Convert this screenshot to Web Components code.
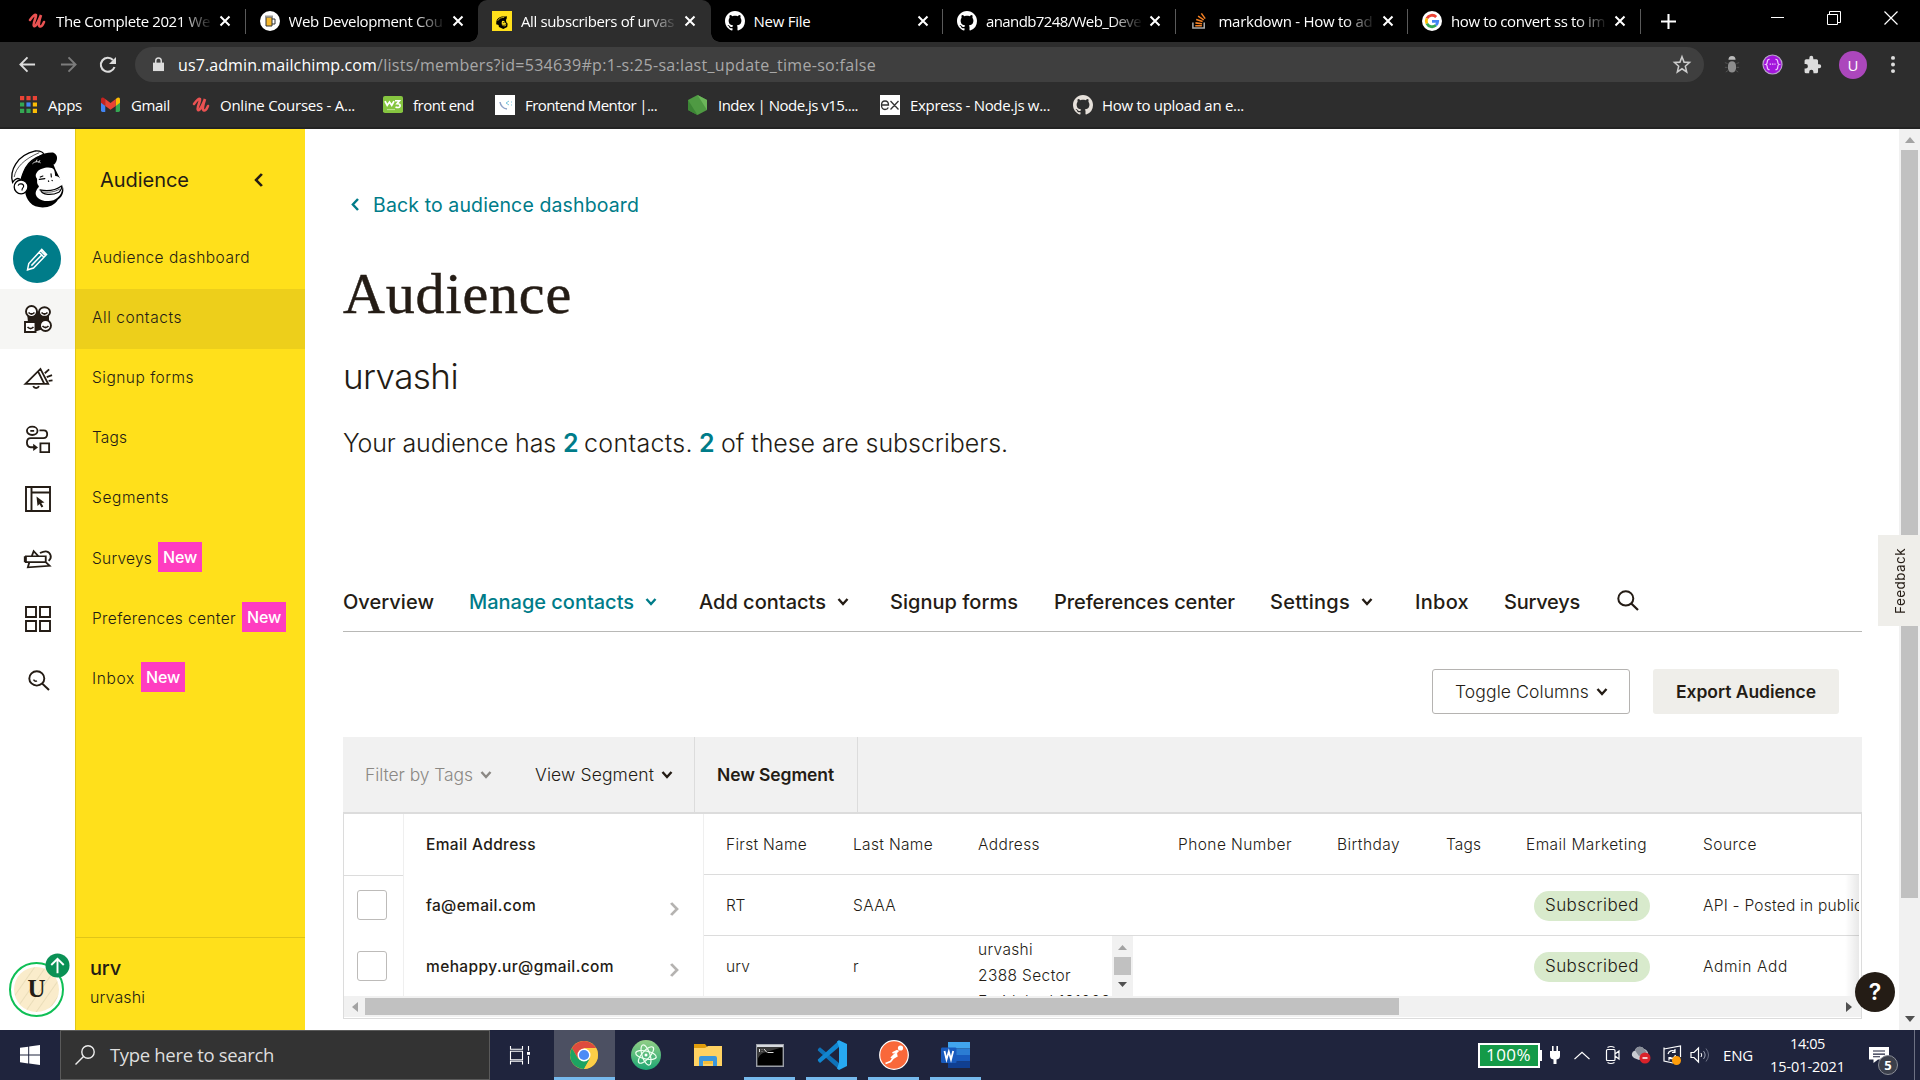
<!DOCTYPE html>
<html lang="en">
<head>
<meta charset="utf-8">
<title>All subscribers of urvashi</title>
<style>
html,body{margin:0;height:100%;overflow:hidden;background:#fff}
body{font-family:Inter,"Liberation Sans",sans-serif;color:#241c15}
</style>
</head>
<body>
<desktop-screen></desktop-screen>
<script>
const define = (name, css, html, setup) => {
  const t = document.createElement('template');
  customElements.define(name, class extends HTMLElement {
    connectedCallback() {
      if (this.shadowRoot) return;
      const root = this.attachShadow({mode: 'open'});
      t.innerHTML = '<style>*{box-sizing:border-box}' + css + '</style>' + (typeof html === 'function' ? html(this) : html);
      root.appendChild(t.content.cloneNode(true));
      if (setup) setup(this, root);
    }
  });
};

/* Text run tracked to an exact advance width */
define('fit-text', ':host{display:block;flex:none;white-space:pre}span{display:inline-block}', '<span><slot></slot></span>', (el, root) => {
  const w = +el.getAttribute('w');
  if (!w) return;
  el.style.width = w + 'px';
  const s = root.querySelector('span');
  s.style.letterSpacing = '0px';
  const nat = s.getBoundingClientRect().width;
  s.style.letterSpacing = ((w - nat) / el.textContent.length) + 'px';
});

const GH = '<path fill="currentColor" d="M8 0C3.58 0 0 3.58 0 8c0 3.54 2.29 6.53 5.47 7.59.4.07.55-.17.55-.38 0-.19-.01-.82-.01-1.49-2.01.37-2.53-.49-2.69-.94-.09-.23-.48-.94-.82-1.13-.28-.15-.68-.52-.01-.53.63-.01 1.08.58 1.23.82.72 1.21 1.87.87 2.33.66.07-.52.28-.87.51-1.07-1.78-.2-3.64-.89-3.64-3.95 0-.87.31-1.59.82-2.15-.08-.2-.36-1.02.08-2.12 0 0 .67-.21 2.2.82.64-.18 1.32-.27 2-.27s1.36.09 2 .27c1.53-1.04 2.2-.82 2.2-.82.44 1.1.16 1.92.08 2.12.51.56.82 1.27.82 2.15 0 3.07-1.87 3.75-3.65 3.95.29.25.54.73.54 1.48 0 1.07-.01 1.93-.01 2.2 0 .21.15.46.55.38A8.01 8.01 0 0 0 16 8c0-4.42-3.58-8-8-8z"/>';
const CHIMP = '<path d="M66 118C56 140 62 152 76 164C70 190 80 216 106 229C134 238 164 229 175 209C192 200 196 178 188 163C184 146 176 134 168 118L160 98L120 84L80 92Z"/><path d="M36 156C26 122 48 74 106 61C122 60 134 66 130 73C108 80 86 94 76 112C68 128 64 138 62 149C52 140 42 146 36 156Z" fill="#fff" stroke="#000" stroke-width="4"/><path d="M41 140C46 112 70 86 118 66" fill="none" stroke="#000" stroke-width="2"/><path d="M92 104C96 84 128 64 162 66C176 72 176 90 163 103C146 94 124 98 108 116Z"/><path d="M97 100C104 92 116 92 122 97M108 95l3-8M116 96l4-7" fill="none" stroke="#fff" stroke-width="2.5"/><circle cx="62" cy="170" r="21" fill="#fff" stroke="#000" stroke-width="4"/><path d="M53 166C56 158 70 160 70 168C69 174 64 172 65 181" fill="none" stroke="#000" stroke-width="3.500"/><path d="M112 124C122 110 158 106 163 118C166 124 166 132 167 137C182 138 192 154 189 172C187 200 166 214 144 213C118 213 102 197 108 183C112 174 116 172 117 168C106 156 116 150 108 141C106 134 107 130 112 124Z" fill="#fff"/><g fill="none" stroke="#000" stroke-width="3.6" stroke-linecap="round"><path d="M120 179C146 184 168 180 186 167M122 180C126 196 158 196 178 186C185 181 188 172 186 168"/><path d="M126 185C146 188 164 186 180 177" stroke-width="2"/><path d="M118 147l17-2M121 140l8-3M154 130l1 10M146 152l1 1M157 150l1 1"/></g>';
const STK = 'fill="none" stroke="currentColor"';
const ICONS = {
  udemy: ['0 0 18 18', '<path d="M2 8C5 4 7 2 8 3S4 13 6 14S11 8 13 3C11 9 10 14 12 14.500S15 12 16 10" fill="none" stroke="#ea5252" stroke-width="2.600" stroke-linecap="round"/>'],
  beer: ['0 0 20 20', '<circle cx="10" cy="10" r="10" fill="#fff"/><path d="M6 6h6v9H6z" fill="#f5b82e" stroke="#333"/><path d="M12 8h3v5h-3" fill="none" stroke="#333"/><path d="M5 5.500h8" stroke="#999" stroke-width="2"/>'],
  chimpfav: ['0 0 230 250', '<path fill="#ffe01b" d="M0 0h230v250H0z"/>' + '<path d="M50 130C60 80 110 60 150 70L172 66L168 100L160 110L165 140L180 160L175 200L130 225L80 200L75 175L48 165Z"/><path d="M66 122C80 90 110 80 140 80" fill="none" stroke="#ffe01b" stroke-width="9"/><path d="M115 125q30-10 35 20q25 20 10 38q-25 15-45-4q-10-20 0-54Z" fill="#ffe01b"/><path d="M115 175q20 12 50-5M125 145h20" stroke="#000" stroke-width="8" fill="none"/>'],
  github: ['0 0 16 16', GH],
  so: ['0 0 18 20', '<path d="M2 12v6h12v-6" fill="none" stroke="#aaa" stroke-width="1.600"/><path d="M4.500 15.500h7M4.700 12.500l7 .8M5.500 9l6.800 2M7.500 5.500l6 3.800M11 2.500l4 5.500" stroke="#f48024" stroke-width="1.600"/>'],
  google: ['0 0 20 20', '<circle cx="10" cy="10" r="10" fill="#fff"/><g fill="none" stroke-width="2.800"><path d="M14.200 6A5.800 5.800 0 0 0 4.900 7.400" stroke="#ea4335"/><path d="M4.900 7.400A5.800 5.800 0 0 0 4.900 12.600" stroke="#fbbc05"/><path d="M4.900 12.600A5.800 5.800 0 0 0 13.900 14.300" stroke="#34a853"/><path d="M13.900 14.300A5.600 5.600 0 0 0 15.700 10.300H10" stroke="#4285f4"/></g>'],
  x: ['0 0 12 12', '<path d="M1.500 1.500l9 9M10.500 1.500l-9 9" stroke="currentColor" stroke-width="2"/>'],
  plus: ['0 0 16 16', '<path d="M8 0v16M0 8h16" stroke="#fff" stroke-width="2.200"/>'],
  min: ['0 0 14 14', '<path d="M0 6.500h13" stroke="#fff"/>'],
  restore: ['0 0 14 14', '<path d="M.5 3.500h10v10H.5zM2.500 3V.5h11v11H11" fill="none" stroke="#fff"/>'],
  close: ['0 0 14 14', '<path d="M.5.5l13 13M13.500.5l-13 13" stroke="#fff" stroke-width="1.200"/>'],
  back: ['0 0 18 18', `<path ${STK} stroke-width="2" d="M17 9H2M9 1.500L1.500 9L9 16.500"/>`],
  fwd: ['0 0 18 18', `<path ${STK} stroke-width="2" d="M1 9h15M9 1.500L16.500 9L9 16.500"/>`],
  reload: ['0 0 18 18', '<path d="M15.500 11A7 7 0 1 1 14 4" fill="none" stroke="currentColor" stroke-width="2.100"/><path d="M17 1v7h-7z" fill="currentColor"/>'],
  lock: ['0 0 12 16', '<path d="M0 6h12v9H0z" fill="currentColor"/><path d="M3 7V4a3 3 0 0 1 6 0v3" fill="none" stroke="currentColor" stroke-width="1.600"/>'],
  star: ['0 0 20 20', `<path ${STK} stroke-width="1.700" d="M10 1.800l2.300 5.700 6 .4-4.600 3.900 1.500 6-5.200-3.300-5.200 3.300 1.500-6L1.700 7.900l6-.4z"/>`],
  bug: ['0 0 18 20', '<path d="M5 5a4 4 0 0 1 8 0z" fill="#bbb"/><rect x="4.500" y="6.500" width="9" height="12" rx="4.500" fill="#8d8d8d"/><path d="M1 8l3 1M17 8l-3 1M1 13h3M17 13h-3M2 18l3-2M16 18l-3-2" stroke="#555"/>'],
  purple: ['0 0 22 22', '<circle cx="11" cy="11" r="10" fill="#a316dc" stroke="#b9a0cc" stroke-width="1.200"/><path d="M8 5.500q-2.500 0-2.500 3q0 2-1.500 2.500q1.500.5 1.500 2.500q0 3 2.500 3M14 5.500q2.500 0 2.500 3q0 2 1.500 2.500q-1.500.5-1.500 2.500q0 3-2.500 3M8 10.500h1.500M10.500 10.500H12M13 10.500h1.200" fill="none" stroke="#f0c6ff" stroke-width="1.300"/>'],
  puzzle: ['0 0 24 24', '<path fill="#dcdcdc" d="M20.500 11H19V7a2 2 0 0 0-2-2h-4V3.500a2.500 2.500 0 0 0-5 0V5H4a2 2 0 0 0-2 2v3.800h1.500a2.700 2.700 0 0 1 0 5.400H2V20a2 2 0 0 0 2 2h3.800v-1.500a2.700 2.700 0 0 1 5.400 0V22H17a2 2 0 0 0 2-2v-4h1.500a2.500 2.500 0 0 0 0-5z"/>'],
  dots: ['0 0 4 18', '<g fill="#ddd"><circle cx="2" cy="2" r="2"/><circle cx="2" cy="9" r="2"/><circle cx="2" cy="16" r="2"/></g>'],
  apps: ['0 0 17 17', '<path fill="#ea4335" d="M0 0h4.200v4.200H0zM6.400 0h4.200v4.200H6.400zM12.800 0H17v4.200h-4.200z"/><path fill="#34a853" d="M0 6.400h4.200v4.200H0zM0 12.800h4.200V17H0zM6.400 12.800h4.200V17H6.400z"/><path fill="#4285f4" d="M6.400 6.400h4.200v4.200H6.400z"/><path fill="#fbbc05" d="M12.800 6.400H17v4.200h-4.200zM12.800 12.800H17V17h-4.200z"/>'],
  gmail: ['0 0 20 16', '<path fill="#4285f4" d="M0 3h4.500v13H1.500Q0 16 0 14.500z"/><path fill="#34a853" d="M15.500 3H20v11.500q0 1.500-1.500 1.500h-3z"/><path fill="#fbbc04" d="M15.500 2Q20-1.500 20 3v3l-4.500 3.500z"/><path fill="#c5221f" d="M4.500 2Q0-1.500 0 3v3l4.500 3.500z"/><path fill="#ea4335" d="M4.500 2L10 6.300 15.500 2v7.500L10 13.500 4.500 9.500z"/>'],
  w3: ['0 0 20 20', '<rect width="20" height="20" rx="2" fill="#86c540"/><path d="M2 6l2.200 5L6.500 7l2.200 4L11 6M12 5.500h4.500L14 9q3.500 0 3 3q-1 2.500-4.500 1" fill="none" stroke="#fff" stroke-width="1.800"/><path d="M4 16h8" stroke="#c8e8a0"/>'],
  fm: ['0 0 20 20', '<path fill="#fff" d="M0 0h20v20H0z"/><path d="M5 7q1 6 7 7" fill="none" stroke="#8fa3c8" stroke-width="1.500"/><path d="M14 6l-3 2 3 2M16 7h1M16 10h1" fill="none" stroke="#7cc5dd"/>'],
  node: ['0 0 18 20', '<path fill="#4f9a43" d="M9 0l9 5v10l-9 5-9-5V5z"/><path fill="#6cb65a" d="M9 0l9 5v10z"/><path fill="#3c8535" d="M0 5l9 15-9-5z"/>'],
  express: ['0 0 20 20', '<path fill="#fff" d="M0 0h20v20H0z"/><path d="M1.500 10h7q0-4-3.500-4T1.500 10q0 4.500 3.500 4.500q2.500 0 3.300-2M10.500 6l8 8.500M18.500 6l-8 8.500" fill="none" stroke="#333" stroke-width="1.300"/>'],
  pencil: ['0 0 30 30', '<path d="M4 26.500L5.500 19.500 20.500 3.800 26 9.500 11 24.500zM17.500 7l5.500 5.500M19.300 5.200l5.500 5.500M8.500 21.800L21 9.500" fill="none" stroke="#fff" stroke-width="1.700"/>'],
  people: ['0 0 28 28', '<path fill="#241c15" d="M3 8q11-3 22 0v12q-10 8-20 6z"/><g fill="#fff" stroke="#241c15" stroke-width="1.900"><circle cx="7.500" cy="6.500" r="5.500"/><ellipse cx="20.500" cy="7" rx="5.500" ry="4.800"/><circle cx="21.500" cy="20.500" r="5.500"/><path d="M1 17h10.500v10H1z"/></g><g fill="none" stroke="#241c15" stroke-width="1.700"><path d="M4.500 7.500q3 3 6 0M17.500 7.500q3 3 6 0M18.500 21q3 3 6 0M3.500 22q3 3 6 0"/></g>'],
  horn: ['0 0 30 26', '<g fill="none" stroke="#241c15" stroke-width="1.900"><path d="M1.500 17.500L17 2l8 15.500zM14.500 4.500l6.500 13M9.500 20a3.300 3.300 0 0 0 6 0M21.500 6.500L26 2.500M23.500 10.500l5.500-2M25.500 14.500l4-.5"/></g>'],
  flow: ['0 0 28 30', '<g fill="none" stroke="#241c15" stroke-width="1.900"><ellipse cx="7.500" cy="6" rx="5.500" ry="4.300"/><path d="M5.500 6h4M15 5.500h4.500q3.500 0 3.500 4t-4 4H6q-4 0-4 4.500t4 5h4"/><path d="M16 19h9v9h-9z"/></g><path d="M8.500 19.500l5 3.800-5 3.500z" fill="#241c15"/>'],
  site: ['0 0 26 26', '<g fill="none" stroke="#241c15" stroke-width="1.900"><path d="M1 1h24v24H1zM6.500 1v24M6.500 6.500H25"/></g><path d="M11.500 10.500l8 6-3.200.6 2 3.500-1.800 1-2-3.500-2 2z" fill="#241c15"/>'],
  integ: ['0 0 30 24', '<g fill="none" stroke="#241c15" stroke-width="1.900"><path d="M2 9h20.500v6.500H2zM5.500 15.500l-1.500 5.500 22.500-1.500-4-4M8 9l2-5.500 5 5.500M16.500 5.500q9-4.500 11 2.500q1 3.500-2 6M.8 9v6.500"/></g>'],
  grid4: ['0 0 26 26', '<path d="M1 1h10v10H1zM15 1h10v10H15zM1 15h10v10H1zM15 15h10v10H15z" fill="none" stroke="#241c15" stroke-width="1.900"/>'],
  search: ['0 0 22 22', '<circle cx="8.800" cy="8.800" r="7.500" fill="none" stroke="currentColor" stroke-width="2"/><path d="M14 14l7 7" stroke="currentColor" stroke-width="2.200"/>'],
  searchsmile: ['0 0 22 22', '<circle cx="8.800" cy="8.800" r="7.500" fill="none" stroke="currentColor" stroke-width="1.900"/><path d="M14 14l7 7" stroke="currentColor" stroke-width="2"/><path d="M5.500 10q1.500 2.500 3.500 1.500" fill="none" stroke="currentColor" stroke-width="1.500"/>'],
  down: ['0 0 12 8', `<path ${STK} stroke-width="2.400" d="M1.500 1L6 6 10.500 1"/>`],
  left: ['0 0 8 14', `<path ${STK} stroke-width="2.400" d="M7 1L1.800 7 7 13"/>`],
  right: ['0 0 8 14', `<path ${STK} stroke-width="2.600" d="M1 1l5.200 6L1 13"/>`],
  chimp: ['25 55 175 182', CHIMP],
  uparrow: ['0 0 26 26', '<circle cx="13" cy="13" r="12.500" fill="#0a9155"/><path d="M13 21V6M6.500 12.500L13 6l6.500 6.500" fill="none" stroke="#fff" stroke-width="2"/>'],
  win: ['0 0 20 20', '<path fill="#fff" d="M0 2.800L8.200 1.700v7.800H0zM9.200 1.500L20 0v9.500H9.200zM0 10.500h8.200v7.900L0 17.200zM9.200 10.500H20V20L9.200 18.500z"/>'],
  tsearch: ['0 0 20 20', '<circle cx="13" cy="7" r="6.200" fill="none" stroke="#eee" stroke-width="1.400"/><path d="M8.500 11.500L.5 19.500" stroke="#eee" stroke-width="1.500"/>'],
  taskview: ['0 0 20 20', '<path d="M.5 0v3.500h12V0M.5 5.500h12v9H.5zM.5 19.500v-3.500h12v3.500M18.500 0v5M18.500 10.500v8.500" fill="none" stroke="#fff" stroke-width="1.100"/><path fill="#fff" d="M17 6.300h3v3h-3z"/>'],
  chrome: ['0 0 28 28', '<circle cx="14" cy="14" r="14" fill="#fbc02d"/><path d="M14 7h12.100A14 14 0 0 0 1.900 7L8 17.500z" fill="#de4b3e"/><path d="M1.900 7A14 14 0 0 0 14 28l6-10.500L14 20l-6-2.500z" fill="#1da362"/><path d="M26.100 7H14l6 10.500L14 28A14 14 0 0 0 26.100 7z" fill="#fdce47"/><circle cx="14" cy="14" r="6.500" fill="#fff"/><circle cx="14" cy="14" r="5.100" fill="#4c8bf5"/>'],
  atom: ['0 0 30 30', '<defs><linearGradient id="g" x2="0" y2="1"><stop stop-color="#92cf86"/><stop offset="1" stop-color="#1ca673"/></linearGradient></defs><circle cx="15" cy="15" r="15" fill="url(#g)"/><g fill="none" stroke="#eefff0" stroke-width="1.200"><ellipse cx="15" cy="15" rx="10.500" ry="4" transform="rotate(12 15 15)"/><ellipse cx="15" cy="15" rx="10.500" ry="4" transform="rotate(72 15 15)"/><ellipse cx="15" cy="15" rx="10.500" ry="4" transform="rotate(132 15 15)"/></g><circle cx="15" cy="15" r="1.500" fill="#fff"/>'],
  folder: ['0 0 28 24', '<path fill="#e09c0b" d="M0 1h11l2 2.500V8H0z"/><path fill="#ffd262" d="M0 5l11 0 3-2h14v20H0z"/><path fill="#3c97dc" d="M5 23v-8q0-2 2-2h14q2 0 2 2v8h-4v-5H9v5z"/><path fill="#f5bd3a" d="M9.500 18h9v3h-9z"/>'],
  cmd: ['0 0 28 23', '<path fill="#000" stroke="#9a9ea6" stroke-width="1.400" d="M.7.7h26.600v21.600H.7z"/><path fill="#d7dae0" d="M1 .8h26v2.400H1z"/><path fill="#3a3a3a" d="M1.400 3.300h25L7 9q-4 2-5.600 7z"/><path d="M3.500 5v3M6 5.500v.5M6 7.500v.5M8 5l3 3.500M11.500 8.500h6" stroke="#ddd" fill="none"/>'],
  vscode: ['0 0 30 30', '<path fill="#0f72b8" d="M1 9l2-1.800 19 15.800v6.500L.8 10.500z"/><path fill="#1186d0" d="M1 21l2 2L22 7V.5L.8 19.500z"/><path fill="#27a9f2" d="M22 .2L30 4v22l-8 4-2-1.500 2-5.500V7l-2-5.500z"/>'],
  postman: ['0 0 30 30', '<circle cx="15" cy="15" r="14.300" fill="#f9683a" stroke="#fff" stroke-width="1.200"/><circle cx="21.500" cy="8" r="2.600" fill="#fff"/><path d="M19.500 10.500L12 18M18 13.500l-6.500 8-5 2M13.500 13l5-2.500M18.500 15.500l-4 2.500" fill="none" stroke="#fff" stroke-width="1.700"/>'],
  word: ['0 0 30 27', '<path fill="#41a5ee" d="M7 0h22v6.500H7z"/><path fill="#2b7cd3" d="M7 6.500h22V13H7z"/><path fill="#185abd" d="M7 13h22v6.500H7z"/><path fill="#103f91" d="M7 19.500h22V26H7z"/><rect y="5.500" width="15.500" height="15.500" rx="1.200" fill="#185abd"/><path d="M3.500 9l2 8.500L7.800 9.500 10 17.500 12.200 9" fill="none" stroke="#fff" stroke-width="1.800"/>'],
  plug: ['0 0 10 18', '<path fill="#fff" d="M2 0h1.600v5h2.800V0H8v5h2v5q0 3-3.500 3.500V18h-3v-4.500Q0 13 0 10V5h2z"/>'],
  caret: ['0 0 16 10', '<path d="M.5 9L8 1.500 15.500 9" fill="none" stroke="#fff" stroke-width="1.300"/>'],
  meet: ['0 0 16 18', '<path d="M1.500 4.500q0-1 1-1h6.500q1 0 1 1v9q0 1-1 1H2.500q-1 0-1-1zM10 8l4-3v8l-4-3M2.500 1.500Q5.800-.5 9.500 1.500M2.500 16.500q3.300 2 7 0" fill="none" stroke="#fff" stroke-width="1.200"/>'],
  cloud: ['0 0 20 18', '<path d="M3 12a4 4 0 0 1 1-7.500A5 5 0 0 1 13 3a5 5 0 0 1 4 6L8 14z" fill="#c9ccd2"/><path d="M4 4.500A5 5 0 0 1 13 3l3 3-8 4z" fill="#888d98"/><circle cx="14" cy="12" r="5.500" fill="#d9222a"/><path d="M11.500 12h5" stroke="#fff" stroke-width="1.500"/>'],
  sync: ['0 0 21 20', '<path d="M3 4L19.500 1v11M3 2.500V16l9 2" fill="none" stroke="#fff" stroke-width="1.200"/><path d="M7 9a4.500 4.500 0 0 1 7-2.500M14 4v3.500h-3M14.500 10a4.500 4.500 0 0 1-6.500 3M8 15.500V12.500h2.500" fill="none" stroke="#fff" stroke-width="1.200"/><circle cx="15.500" cy="15.500" r="4.500" fill="#ff9d0a"/>'],
  vol: ['0 0 21 18', '<path d="M1 6.500h3L8.500 2v14L4 11.500H1z" fill="none" stroke="#fff" stroke-width="1.200"/><path d="M11 7q1.500 2 0 4" fill="none" stroke="#fff"/><path d="M13.500 5q3.200 4 0 8" fill="none" stroke="#999eb0"/><path d="M16 2.500q5 6.500 0 13" fill="none" stroke="#6b7085"/>'],
  note: ['0 0 20 20', '<path d="M0 1h20v14H9l-4.500 4v-4H0z" fill="#fff"/><path d="M4 5.500h12M4 9h12M4 12h7" stroke="#1f233c" stroke-width="1.200"/>'],
  tri: ['0 0 10 6', '<path d="M0 6L5 0l5 6z" fill="currentColor"/>']
};
define('ui-icon', ':host{display:block;flex:none}svg{display:block;width:100%;height:100%;overflow:visible}', el => {
  const i = ICONS[el.getAttribute('name')];
  return `<svg viewBox="${i[0]}" preserveAspectRatio="none">${i[1]}</svg>`;
}, el => { el.style.width = el.getAttribute('w') + 'px'; el.style.height = el.getAttribute('h') + 'px'; });

const ic = (n, w, h, s = '') => `<ui-icon name="${n}" w="${w}" h="${h}" style="${s}"></ui-icon>`;
const tx = (t, w, s = '') => `<fit-text w="${w}" style="${s}">${t}</fit-text>`;

define('browser-tab', `:host{display:flex;align-items:center;flex:none;width:232.500px;height:42px;padding:0 0 1px 14px;position:relative;color:#fff}
.f{width:20px;display:flex;justify-content:center;margin-right:9px}.t{width:156px;overflow:hidden}
.t.m{-webkit-mask:linear-gradient(90deg,#000 125px,transparent 157px)}
.s{position:absolute;right:0;top:9px;width:1px;height:25px;background:#5a5a5a}
:host([active]){background:#2d2d2d;border-radius:9px 9px 0 0}
:host([active])::before,:host([active])::after{content:"";position:absolute;bottom:0;width:9px;height:9px}
:host([active])::before{left:-9px;background:radial-gradient(circle at 0 0,transparent 8.500px,#2d2d2d 9px)}
:host([active])::after{right:-9px;background:radial-gradient(circle at 100% 0,transparent 8.500px,#2d2d2d 9px)}
:host([active]) .s,:host([nosep]) .s{display:none}`,
  el => `<div class="f"><slot name="icon"></slot></div><div class="t ${el.hasAttribute('short') ? '' : 'm'}"><slot></slot></div>${ic('x', 12, 12, 'margin-left:7px')}<i class="s"></i>`);
const tab = (icon, t, w, a = '') => `<browser-tab ${a}>${icon.replace('<ui-icon', '<ui-icon slot="icon"')}${tx(t, w)}</browser-tab>`;

define('browser-chrome', `:host{display:block;flex:none;height:129px;background:#2d2d2d;font:15px/20px "Open Sans","Noto Sans",sans-serif;color:#fff;border-bottom:2px solid #232323}
.r{display:flex;align-items:center}.tabs{height:42px;background:#000;padding-left:13px}
.nav{height:45px;padding-left:19px;color:#dcdcdc}.omni{display:flex;align-items:center;width:1569px;height:35px;border-radius:18px;background:#3f3f3f;padding:0 13px 0 18px;font-size:16px;color:#dcdcdc}
.u{width:28px;height:28px;border-radius:50%;background:#ab47bc;color:#fff;font-size:15px;line-height:28px;text-align:center}
.bm{height:35px;padding-left:20px}`,
`<div class="r tabs">
${tab(ic('udemy', 18, 18), 'The Complete 2021 We', 154)}
${tab(ic('beer', 20, 20), 'Web Development Cou', 154, 'nosep')}
${tab(ic('chimpfav', 20, 20), 'All subscribers of urvas', 153, 'active')}
${tab(ic('github', 20, 20), 'New File', 57, 'short')}
${tab(ic('github', 20, 20), 'anandb7248/Web_Deve', 155)}
${tab(ic('so', 17, 19), 'markdown - How to ad', 154)}
${tab(ic('google', 20, 20), 'how to convert ss to im', 154)}
${ic('plus', 15, 15, 'margin-left:20px')}${ic('min', 14, 14, 'margin:-6px 0 0 95px')}${ic('restore', 14, 14, 'margin:-6px 0 0 42px')}${ic('close', 14, 14, 'margin:-6px 0 0 43px')}
</div>
<div class="r nav">${ic('back', 17, 17)}${ic('fwd', 17, 17, 'margin-left:24px;color:#7c7c7c')}${ic('reload', 18, 18, 'margin:0 18px 0 22px')}
<div class="omni">${ic('lock', 11, 15, 'margin:0 14px 0 0')}${tx('us7.admin.mailchimp.com', 199, 'color:#fff')}${tx('/lists/members?id=534639#p:1-s:25-sa:last_update_time-so:false', 499, 'color:#a8a8a8')}${ic('star', 18, 19, 'margin-left:auto;color:#ccc')}</div>
${ic('bug', 16, 19, 'margin-left:20px')}${ic('purple', 21, 21, 'margin-left:22px')}${ic('puzzle', 19, 20, 'margin-left:20px')}<div class="u" style="margin-left:17px">U</div>${ic('dots', 4, 17, 'margin-left:24px')}</div>
<div class="r bm">
${ic('apps', 17, 17)}${tx('Apps', 34, 'margin-left:11px')}
${ic('gmail', 19, 15, 'margin-left:19px')}${tx('Gmail', 39, 'margin-left:11px')}
${ic('udemy', 18, 18, 'margin-left:22px')}${tx('Online Courses - A...', 135, 'margin-left:10px')}
${ic('w3', 20, 17, 'margin-left:28px')}${tx('front end', 61, 'margin-left:10px')}
${ic('fm', 20, 20, 'margin-left:21px')}${tx('Frontend Mentor |...', 132, 'margin-left:10px')}
${ic('node', 19, 20, 'margin-left:31px')}${tx('Index | Node.js v15....', 140, 'margin-left:11px')}
${ic('express', 20, 20, 'margin-left:22px')}${tx('Express - Node.js w...', 140, 'margin-left:10px')}
${ic('github', 20, 20, 'margin-left:23px;color:#e6e0da')}${tx('How to upload an e...', 142, 'margin-left:9px')}
</div>`);

define('rail-item', ':host{display:flex;align-items:center;justify-content:center;height:60px;width:75px;padding-left:1px}:host([on]){background:#f6f6f4}', '<slot></slot>');
define('icon-rail', `:host{display:flex;flex-direction:column;width:75px;flex:none;background:#fff}
.logo{height:100px;padding:20px 0 0 9px}.pen{width:48px;height:48px;border-radius:50%;background:#007c89;display:flex;align-items:center;justify-content:center;margin-left:-2px}
.av{margin:auto 0 13px 9px;width:55px;height:55px;border-radius:50%;border:2px solid #0fbf55;padding:3px;position:relative}
.av b{display:block;width:45px;height:45px;border-radius:50%;background:repeating-linear-gradient(125deg,#faeccb 0 7px,#eaddb9 8px,#faeccb 9px);font:600 25px/43px "Liberation Serif",serif;text-align:center}
.av ui-icon{position:absolute;left:34px;top:-11px}`,
`<div class="logo">${ic('chimp', 57, 60)}</div>
<rail-item><div class="pen">${ic('pencil', 26, 27)}</div></rail-item>
<rail-item on>${ic('people', 28, 28)}</rail-item><rail-item>${ic('horn', 29, 25)}</rail-item><rail-item>${ic('flow', 27, 29)}</rail-item>
<rail-item>${ic('site', 26, 26)}</rail-item><rail-item>${ic('integ', 29, 22)}</rail-item><rail-item>${ic('grid4', 26, 26)}</rail-item><rail-item>${ic('searchsmile', 22, 21, 'margin:2px 0 0 2px')}</rail-item>
<div class="av"><b>U</b>${ic('uparrow', 25, 25)}</div>`);

define('nav-link', `:host{display:flex;align-items:center;height:60px;padding:0 0 3px 16px;font-size:15.500px;font-weight:300}:host([on]){background:#edcf1b}
:host([badge]){padding-bottom:1px}.b{background:#ff3dc0;color:#fff;height:30px;width:44px;margin:-3px 0 0 6px;padding-left:5px;font-size:16px;font-weight:500;line-height:30px}`,
  el => `<slot></slot>${el.hasAttribute('badge') ? `<div class="b">${tx('New', 34)}</div>` : ''}`);
define('side-nav', `:host{display:flex;flex-direction:column;width:230px;flex:none;background:#ffe01b;border-left:1px solid #e0c518}
.h{display:flex;align-items:center;height:102px;margin-bottom:-2px;padding:0 0 0 24px;font-size:20px;font-weight:400}
.f{margin-top:auto;height:93px;border-top:1px solid #e0c518;padding:17px 0 0 14px}`,
`<div class="h">${tx('Audience', 89)}${ic('left', 9, 14, 'margin:-1px 0 0 65px')}</div>
<nav-link>${tx('Audience dashboard', 158)}</nav-link><nav-link on>${tx('All contacts', 90)}</nav-link><nav-link>${tx('Signup forms', 102)}</nav-link><nav-link>${tx('Tags', 35)}</nav-link><nav-link>${tx('Segments', 77)}</nav-link>
<nav-link badge>${tx('Surveys', 60)}</nav-link><nav-link badge>${tx('Preferences center', 144)}</nav-link><nav-link badge>${tx('Inbox', 43)}</nav-link>
<div class="f">${tx('urv', 31, 'font:500 20px/26px Inter')}${tx('urvashi', 55, 'font:300 16px/33px Inter')}</div>`);

define('page-tabs', ':host{display:flex;align-items:center;height:60px;border-bottom:1.500px solid #b8b8b6;font-size:20px;font-weight:450;width:1519px}',
`${tx('Overview', 91)}${tx('Manage contacts', 165, 'margin-left:35px;color:#007c89')}${ic('down', 12, 8, 'margin-left:11px;color:#007c89')}
${tx('Add contacts', 127, 'margin-left:42px')}${ic('down', 12, 8, 'margin-left:11px')}${tx('Signup forms', 128, 'margin-left:41px')}${tx('Preferences center', 181, 'margin-left:36px')}
${tx('Settings', 80, 'margin-left:35px')}${ic('down', 12, 8, 'margin-left:11px')}${tx('Inbox', 54, 'margin-left:42px')}${tx('Surveys', 76, 'margin-left:35px')}${ic('search', 22, 21, 'margin:-3px 0 0 37px')}`);

define('filter-bar', `:host{display:flex;width:1519px;height:77px;background:#f1f1f1;border-bottom:2px solid #dcdcdc;font-size:17.500px;font-weight:300;line-height:24px}
div{display:flex;align-items:center;border-right:1px solid #dcdcdc}`,
`<div style="width:352px;padding-left:22px">${tx('Filter by Tags', 108, 'color:#8b8884')}${ic('down', 12, 8, 'margin-left:7px;color:#8b8884')}${tx('View Segment', 119, 'margin-left:43px')}${ic('down', 12, 8, 'margin-left:7px')}</div>
<div style="width:163px;padding-left:22px">${tx('New Segment', 117, 'font-weight:600')}</div>`);

define('check-box', ':host{display:block;width:30px;height:30px;border:1.500px solid #bdbbb9;border-radius:3px;background:#fff}', '');
define('status-pill', ':host{display:block;width:116px;height:30px;border-radius:15px;background:#d8eacc;padding-left:11px;font-size:17px;line-height:28px}', '<slot></slot>');
define('address-cell', `:host{display:flex;width:155px;height:60px;overflow:hidden;margin-top:-2px}.l{width:134px;height:60px;overflow:hidden;line-height:26px;padding-top:1px}.s{width:21px;background:#f1f1f1;display:flex;flex-direction:column;align-items:center;padding-top:9px}
i{display:block;width:17px;height:18px;background:#c1c1c1;margin:7px 0}`,
`<div class="l">${tx('urvashi', 55)}${tx('2388 Sector', 93)}${tx('Faridabad 121002', 133)}</div><div class="s">${ic('tri', 9, 5, 'color:#a3a3a3')}<i></i>${ic('tri', 9, 5, 'color:#505050;transform:rotate(180deg)')}</div>`);

const row = (cells, h, b) => `<div class="row" style="height:${h}px;${b ? 'border-bottom:1px solid #dcdcdc' : ''}">${cells.map((c, i) => `<div class="c${i}">${c}</div>`).join('')}</div>`;
define('contacts-table', `:host{display:block;width:1519px;height:205px;border:1px solid #dcdcdc;border-top:0;font-size:15.500px;font-weight:300;line-height:24px}
.g{display:flex;height:182px;overflow:hidden}
.k{width:60px;border-right:1px solid #efefef;flex:none}.k div{height:61px;display:flex;align-items:center;padding-left:13px}.k div:first-child{height:62px;border-bottom:1px solid #dcdcdc}.k div+div{padding-bottom:3px}
.e{width:300px;border-right:1px solid #efefef;font-weight:500;flex:none}.e div{height:61px;display:flex;align-items:center;justify-content:space-between;padding:0 24px 0 22px}
.d{width:1155px;overflow:hidden;position:relative}.d::after{content:"";position:absolute;right:0;top:61px;width:14px;height:130px;background:linear-gradient(90deg,transparent,rgba(0,0,0,.09))}
.row{display:grid;grid-template-columns:127px 125px 200px 159px 109px 80px 177px 179px;padding:2px 0 0 22px;align-items:center;width:1200px}.c6 status-pill{margin-left:8px}
.hs{display:flex;align-items:center;height:21px;background:#f1f1f1;padding:0 7px 0 6px}.hs i{width:1034px;height:17px;background:#c1c1c1;margin-left:5px}`,
`<div class="g"><div class="k"><div></div><div><check-box></check-box></div><div><check-box></check-box></div></div>
<div class="e"><div>${tx('Email Address', 110)}</div><div>${tx('fa@email.com', 110)}${ic('right', 9, 14, 'color:#b5b3b1;margin-top:6px')}</div><div>${tx('mehappy.ur@gmail.com', 188)}${ic('right', 9, 14, 'color:#b5b3b1;margin-top:6px')}</div></div>
<div class="d">
${row([tx('First Name', 81), tx('Last Name', 80), tx('Address', 62), tx('Phone Number', 114), tx('Birthday', 63), tx('Tags', 35), tx('Email Marketing', 121), tx('Source', 54)], 61, 1)}
${row([tx('RT', 19), tx('SAAA', 43), '', '', '', '', `<status-pill>${tx('Subscribed', 94)}</status-pill>`, tx('API - Posted in public', 160)], 61, 1)}
${row([tx('urv', 24), tx('r', 6), '<address-cell></address-cell>', '', '', '', `<status-pill>${tx('Subscribed', 94)}</status-pill>`, tx('Admin Add', 85)], 60, 0)}
</div></div>
<div class="hs">${ic('tri', 10, 6, 'color:#a3a3a3;transform:rotate(-90deg)')}<i></i>${ic('tri', 10, 6, 'color:#505050;transform:rotate(90deg);margin-left:auto')}</div>`);

define('audience-page', `:host{display:block;flex:1;padding-left:38px;height:901px;overflow:hidden;background:#fff}
.r{display:flex;align-items:center}.btn{display:flex;align-items:center;height:45px;border-radius:3px}`,
`<div class="r" style="height:152px;font-size:19.500px;color:#007c89;font-weight:400">${ic('left', 8, 13, 'margin:-2px 14px 0 8px')}${tx('Back to audience dashboard', 266)}</div>
<div class="r" style="height:26px;font:58px/60px 'Liberation Serif',serif;-webkit-text-stroke:.5px #241c15">${tx('Audience', 229)}</div>
<div class="r" style="height:138px;font-size:35px;font-weight:300">${tx('urvashi', 115)}</div>
<div class="r" style="height:0;margin-top:-2px;font-size:25px;font-weight:300;line-height:30px">${tx('Your audience has', 213)}${tx('2', 15, 'font-weight:600;color:#007c89;margin-left:7px')}${tx('contacts.', 109, 'margin-left:6px')}${tx('2', 15, 'font-weight:600;color:#007c89;margin-left:6px')}${tx('of these are subscribers.', 287, 'margin-left:7px')}</div>
<div style="height:129px"></div>
<page-tabs></page-tabs>
<div class="r" style="height:105px;width:1519px;padding:37px 23px 0 0;justify-content:flex-end;align-items:flex-start;font-size:17.500px">
<div class="btn" style="width:198px;border:1px solid #b5b3b1;padding-left:22px;font-weight:300">${tx('Toggle Columns', 134)}${ic('down', 12, 8, 'margin-left:7px')}</div>
<div class="btn" style="width:186px;background:#efeeea;margin-left:23px;padding-left:23px;font-weight:600">${tx('Export Audience', 140)}</div></div>
<filter-bar></filter-bar><contacts-table></contacts-table>`);

define('page-scrollbar', ':host{display:flex;flex-direction:column;align-items:center;width:21px;height:901px;flex:none;background:#f1f1f1;padding:8px 0}i{width:17px;height:748px;background:#c1c1c1;margin-top:7px}',
`${ic('tri', 10, 6, 'color:#a3a3a3')}<i></i>${ic('tri', 10, 6, 'color:#505050;transform:rotate(180deg);margin-top:auto')}`);

define('feedback-tab', ':host{position:absolute;right:0;top:535px;width:42px;height:91px;background:#efeeea}div{writing-mode:vertical-rl;transform:rotate(180deg);font-size:13.500px;line-height:20px;height:91px;width:34px;display:flex;align-items:center;justify-content:center;letter-spacing:.45px;margin-left:5px}', '<div>Feedback</div>');
define('help-button', ':host{position:absolute;left:1855px;top:972px;width:40px;height:40px;border-radius:50%;background:#241c15;color:#fff;font:600 23px/40px Inter;text-align:center}', '?');

define('task-app', ':host{display:flex;align-items:center;justify-content:center;width:62px;height:50px;flex:none;position:relative}:host([run])::after{content:"";position:absolute;left:5px;right:6px;bottom:0;height:3px;background:#76b9ed}:host([on]){background:#4c5062}:host([on])::after{left:0;right:0}', '<slot></slot>');
define('task-bar', `:host{display:flex;align-items:center;height:50px;flex:none;background:#1f243d;color:#fff;font:15px/24px "Open Sans","Noto Sans",sans-serif}
.s{display:flex;align-items:center;width:430px;height:50px;background:#333;border:1px solid #5a5a5a;margin-left:20px;padding-left:14px;font-size:18.500px;color:#dedede}
.bat{width:62px;height:25px;border:2px solid #fff;background:#149a48;font-size:17px;line-height:20px;padding-left:6px}.tip{width:2px;height:11px;background:#fff}
.t{width:75px;display:flex;flex-direction:column;align-items:center;line-height:23px;margin-left:17px;font-size:14.500px}
.n{position:relative;margin-left:24px}.n b{position:absolute;left:9px;top:9px;width:20px;height:20px;border-radius:50%;background:#3b3f4b;border:1px solid #8a8d96;font-size:13px;line-height:18px;text-align:center}
.e{width:1px;height:50px;background:#6d7183;margin-left:16px}`,
`${ic('win', 20, 20, 'margin-left:20px')}<div class="s">${ic('tsearch', 20, 20)}${tx('Type here to search', 164, 'margin-left:15px')}</div>
${ic('taskview', 20, 19, 'margin:0 24px 0 20px')}
<task-app run on style="width:61px;padding-right:1px">${ic('chrome', 28, 28)}</task-app><task-app>${ic('atom', 30, 30)}</task-app><task-app>${ic('folder', 28, 24)}</task-app><task-app run>${ic('cmd', 28, 23)}</task-app><task-app run>${ic('vscode', 30, 30)}</task-app><task-app run>${ic('postman', 30, 30)}</task-app><task-app run>${ic('word', 30, 27)}</task-app>
<div class="bat" style="margin-left:auto">${tx('100%', 45)}</div><i class="tip"></i>
${ic('plug', 10, 18, 'margin-left:8px')}${ic('caret', 16, 9, 'margin-left:14px')}${ic('meet', 16, 18, 'margin-left:15px')}${ic('cloud', 20, 18, 'margin-left:10px')}${ic('sync', 21, 20, 'margin-left:10px')}${ic('vol', 21, 18, 'margin-left:8px')}
${tx('ENG', 30, 'margin-left:12px')}<div class="t">${tx('14:05', 35)}${tx('15-01-2021', 75)}</div>
<div class="n">${ic('note', 20, 18)}<b>5</b></div><i class="e" style="margin-left:25px;margin-right:5px"></i>`);

define('desktop-screen', ':host{display:flex;flex-direction:column;width:1920px;height:1080px;position:relative;overflow:hidden}main{display:flex;height:901px;flex:none}',
`<browser-chrome></browser-chrome><main><icon-rail></icon-rail><side-nav></side-nav><audience-page></audience-page><page-scrollbar></page-scrollbar></main><task-bar></task-bar><feedback-tab></feedback-tab><help-button></help-button>`);
</script>
</body>
</html>
